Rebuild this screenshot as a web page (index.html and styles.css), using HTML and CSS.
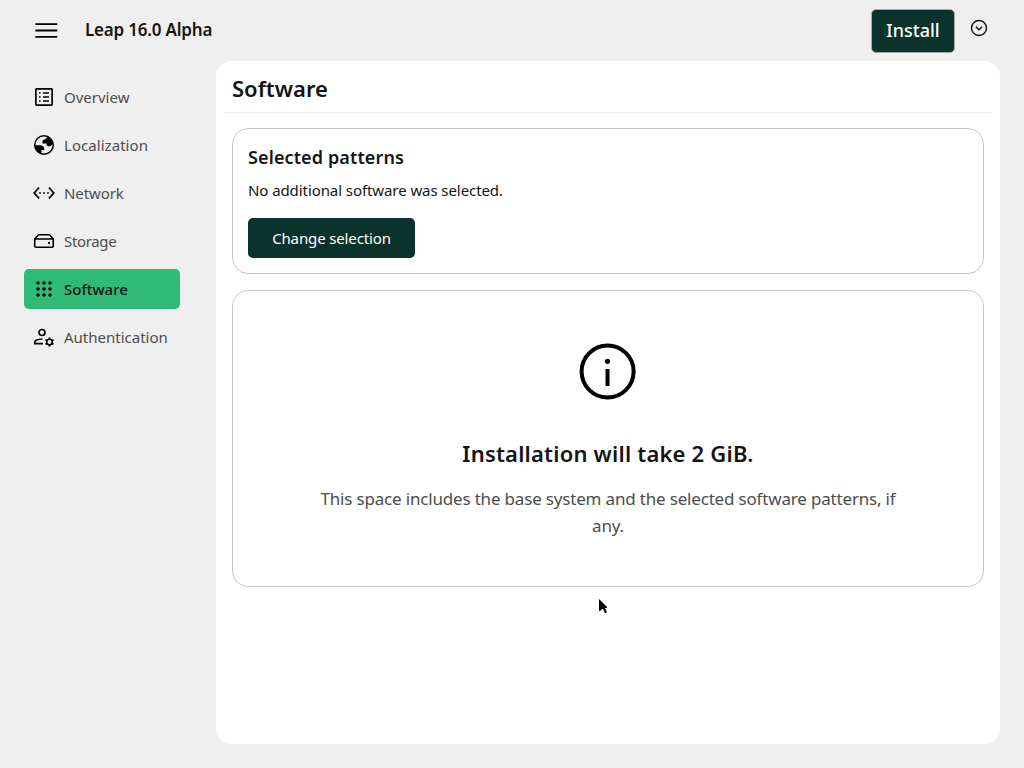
FILE: index.html
```html
<!DOCTYPE html>
<html lang="en">
<head>
<meta charset="utf-8">
<title>Leap 16.0 Alpha</title>
<link rel="stylesheet" href="styles.css">
</head>
<body>
<div class="app">
  <header class="masthead">
    <button class="menu-toggle" aria-label="Menu"><svg width="24" height="18" viewBox="0 0 24 18"><path d="M1.300 2.200h22M1.300 8.500h22M1.300 14.800h22" stroke="#000" stroke-width="1.800"/></svg></button>
    <h1 class="product"><span class="t-product">Leap 16.0 Alpha</span></h1>
    <button class="btn install"><span>Install</span></button>
    <button class="more" aria-label="Options"><svg width="18" height="18" viewBox="0 0 18 18" fill="none" stroke="#111" stroke-width="1.4"><circle cx="9" cy="9" r="7.5"/><path d="M5.9 7.7 9 10.7l3.1-3"/></svg></button>
  </header>
  <div class="body">
    <nav class="sidebar">
      <a class="item"><svg class="icon" viewBox="0 0 24 24"><rect x="3.850" y="3.850" width="16.300" height="16.300" rx=".8" fill="none" stroke="#000" stroke-width="1.700"/><path d="M7 7.200h1.600v1.600H7zM7 11.200h1.600v1.600H7zM7 15.200h1.600v1.600H7zM11 7.200h6v1.600h-6zM11 11.200h6v1.600h-6zM11 15.200h6v1.600h-6z"/></svg><span>Overview</span></a>
      <a class="item"><svg class="icon" viewBox="0 0 24 24"><circle cx="12" cy="12" r="9.250" fill="none" stroke="#000" stroke-width="1.500"/><path d="M13.500 3C18 3.300 21 7 21 11.300l-1.200.4q-.6 1.500-2.100 1.500h-1.500q-1.700 0-1.700-1.700v-1h-4V8.300q0-1.700 1.700-1.700h1.200q0-1.500 1.600-1.900zM3 12.200h5q4 0 4.300 3.800v1H9.500v4Q3 19 3 12.200z"/></svg><span class="t-local">Localization</span></a>
      <a class="item"><svg class="icon" viewBox="0 0 24 24"><path d="M7.200 6.500 2.200 12l5 5.500M16.800 6.500l5 5.500-5 5.500" fill="none" stroke="#000" stroke-width="1.700"/><circle cx="8" cy="12" r=".9"/><circle cx="12" cy="12" r=".9"/><circle cx="16" cy="12" r=".9"/></svg><span class="t-network">Network</span></a>
      <a class="item"><svg class="icon" viewBox="0 0 24 24"><path d="M2.750 10v7q0 1.250 1.250 1.250h16q1.250 0 1.250-1.250v-7zM2.900 9.800 6 6.300Q6.500 5.750 7.200 5.750h9.600q.7 0 1.200.55l3.100 3.500" fill="none" stroke="#000" stroke-width="1.600"/><circle cx="17" cy="14" r="1.150"/></svg><span class="t-storage">Storage</span></a>
      <a class="item active"><svg class="icon" viewBox="0 0 24 24"><circle cx="6" cy="6" r="1.750"/><circle cx="12" cy="6" r="1.750"/><circle cx="18" cy="6" r="1.750"/><circle cx="6" cy="12" r="1.750"/><circle cx="12" cy="12" r="1.750"/><circle cx="18" cy="12" r="1.750"/><circle cx="6" cy="18" r="1.750"/><circle cx="12" cy="18" r="1.750"/><circle cx="18" cy="18" r="1.750"/></svg><span>Software</span></a>
      <a class="item"><svg class="icon" viewBox="0 0 24 24"><g fill="none" stroke="#000" stroke-width="1.700"><circle cx="10" cy="7.500" r="3"/><path d="M11 18.700H2.800v-1.600q0-1.100 1-1.600Q6.500 14 10.500 14"/><circle cx="17.500" cy="17" r="2.800" stroke-width="1.600"/></g><path d="M17.500 12.400v2.100M17.500 19.500v2.100M13.500 14.700l1.800 1.050M19.700 18.250l1.800 1.050M13.500 19.300l1.800-1.050M19.700 15.750l1.800-1.050" stroke="#000" stroke-width="1.900"/></svg><span>Authentication</span></a>
    </nav>
    <main class="panel">
      <div class="panel-head"><h2 class="title"><span>Software</span></h2></div>
      <div class="sections">
        <section class="card patterns">
          <h3 class="card-title"><span class="t-selected">Selected patterns</span></h3>
          <p class="card-text"><span class="t-none">No additional software was selected.</span></p>
          <button class="btn change"><span class="t-change">Change selection</span></button>
        </section>
        <section class="card summary">
          <svg class="info" viewBox="0 0 58 58"><circle cx="28.600" cy="28.500" r="26" fill="none" stroke="#000" stroke-width="4"/><circle cx="28.500" cy="18.300" r="2.600"/><path d="M26.500 26h4v17h-4z"/></svg>
          <h3 class="summary-title"><span class="t-size">Installation will take 2 GiB.</span></h3>
          <p class="summary-text"><span class="t-space">This space includes the base system and the selected software patterns, if</span><br><span class="t-space">any.</span></p>
        </section>
      </div>
    </main>
  </div>
</div>
<svg class="cursor" viewBox="0 0 9 15"><path d="M0 0v12h1l2-2h1l2 4h1.500v-2L5.800 9H8V8z"/></svg>
</body>
</html>
```
FILE: styles.css
```css
* { box-sizing: border-box; }
body { margin: 0; background: #efefef; color: #151515; font-family: "Noto Sans", sans-serif; font-size: 15px; }
h1, h2, h3, p { margin: 0; }
button { border: 0; padding: 0; background: none; font: inherit; display: flex; align-items: center; justify-content: center; }
svg { display: block; flex: none; }
span { white-space: nowrap; }
.app { width: 1024px; height: 768px; display: flex; flex-direction: column; overflow: hidden; }
.masthead { height: 61px; display: flex; align-items: center; padding: 0 36px 0 34px; }
.menu-toggle { width: 24px; margin-top: 1px; }
.product { margin: -1px 0 0 27px; font-size: 17px; font-weight: 600; line-height: 24px; flex: 1; }
.btn { background: #0c322c; color: #fff; border-radius: 5px; }
.install { width: 84px; height: 44px; padding-bottom: 1px; border: 1px solid #9eadaa; font-size: 18px; font-weight: 500; }
.more { width: 18px; margin: -6px 0 0 15px; }
.body { display: flex; height: 683px; }
.sidebar { width: 216px; padding: 16px 36px 0 24px; display: flex; flex-direction: column; gap: 8px; }
.item { height: 40px; display: flex; align-items: center; gap: 8px; padding-left: 8px; color: #4d4d4d; border-radius: 5px; }
.active { background: #30ba78; color: #151515; font-weight: 500; }
.icon { width: 24px; height: 24px; }
.panel { width: 784px; background: #fff; border-radius: 16px; }
.panel-head { height: 51px; margin: 0 7px; padding: 10px 9px 0; box-shadow: 0 2px 2px -1px rgba(0, 0, 0, .1); }
.title { font-size: 22px; line-height: 34px; font-weight: 600; }
.sections { padding: 16px 16px 0; display: flex; flex-direction: column; gap: 16px; }
.card { border: 1px solid #c7c7c7; border-radius: 16px; }
.patterns { height: 146px; padding: 14px 15px 15px; }
.card-title { font-size: 18px; line-height: 28px; font-weight: 600; }
.card-text { font-size: 15px; line-height: 24px; margin: 7px 0 16px; }
.change { width: 167px; height: 40px; }
.summary { height: 297px; padding-top: 52px; display: flex; flex-direction: column; align-items: center; text-align: center; }
.info { width: 58px; height: 58px; }
.summary-title { margin-top: 36px; font-size: 22px; line-height: 32px; font-weight: 600; }
.summary-text { margin-top: 16px; font-size: 17px; line-height: 27px; color: #4d4d4d; }
.t-product { letter-spacing: -.2px; }
.t-local { letter-spacing: .05px; }
.t-network { letter-spacing: -.1px; }
.t-storage { letter-spacing: -.35px; }
.t-selected { letter-spacing: .12px; }
.t-none { letter-spacing: -.08px; }
.t-change { letter-spacing: -.13px; }
.t-size { letter-spacing: .2px; }
.t-space { letter-spacing: -.18px; }
.cursor { position: absolute; left: 599px; top: 599px; width: 9px; height: 15px; }
```
